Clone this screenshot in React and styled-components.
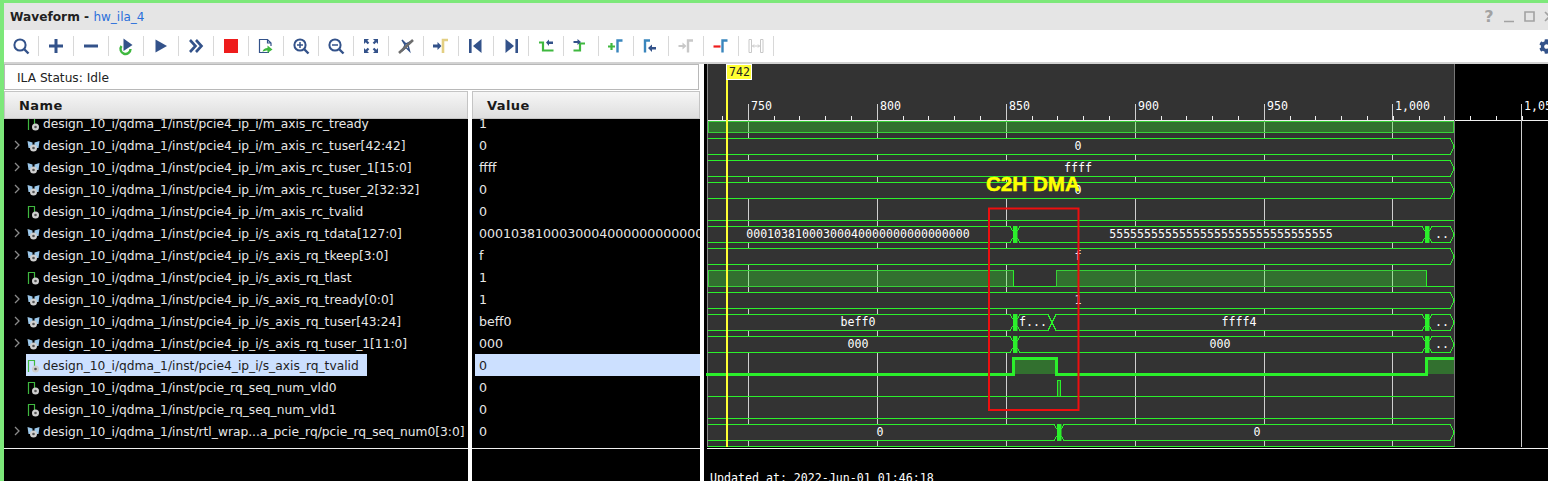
import React from "react";
import styled, { createGlobalStyle } from "styled-components";
import { FaCog } from "react-icons/fa";

const NAVY = "#33528a";
const GREEN = "#3fb83f";
const BLUE = "#3a86bd";
const TRACE = "#2bf02b";

const GlobalStyle = createGlobalStyle`
  html, body {
    margin: 0;
    height: 481px;
    overflow: hidden;
    background: #fff;
  }
`;

// Window frame
const Frame = styled.div`
  height: 478px;
  border-top: 3px solid #7de87a;
  border-left: 4px solid #7de87a;
  display: flex;
  flex-direction: column;
  overflow: hidden;
  font-family: "DejaVu Sans", sans-serif;
`;

const TitleBar = styled.div`
  height: 27px;
  flex: none;
  background: #e5e5e5;
  display: flex;
  align-items: center;
  justify-content: space-between;
  padding-left: 6px;
  font-size: 12.2px;
`;

const TitleText = styled.div`
  font-weight: bold;
  color: #222;
`;

const TitleLink = styled.span`
  font-weight: normal;
  font-size: 12px;
  color: #2a6fdb;
`;

const WindowControls = styled.div`
  display: flex;
  margin-right: -11px;
`;

const WindowButton = styled.div`
  width: 20px;
  height: 20px;
  display: flex;
  align-items: center;
  justify-content: center;
  color: #a2a2a2;
  font-size: 16px;
  font-weight: bold;
`;

// Toolbar
const Toolbar = styled.div`
  height: 32px;
  flex: none;
  background: #fff;
  border-bottom: 2px solid #d2d2d2;
  display: flex;
  align-items: center;
  justify-content: space-between;
`;

const ToolGroup = styled.div`
  display: flex;
  margin-left: -1px;
`;

const ToolButton = styled.div`
  width: 35px;
  height: 32px;
  position: relative;
  display: flex;
  align-items: center;
  justify-content: center;

  &::after {
    content: "";
    position: absolute;
    right: -1px;
    top: 6px;
    height: 20px;
    width: 1px;
    background: #d8d8d8;
  }
`;

const ToolIcon = styled.svg`
  width: 22px;
  height: 22px;
  fill: none;
`;

const GearSlot = styled.div`
  color: ${NAVY};
  display: flex;
  margin-right: -6px;
`;

const stepMark = (x, color) => (
  <path d={`M${x} 17.5V5.5H${x + 5}`} stroke={color} strokeWidth="2.4" />
);

const toolIcons = [
  <>
    <circle cx="10" cy="10" r="5.6" stroke={NAVY} strokeWidth="2" />
    <path d="M14 14l4.5 4.5" stroke={NAVY} strokeWidth="2.4" />
  </>,
  <path d="M11 4v14M4 11h14" stroke={NAVY} strokeWidth="3" />,
  <path d="M4 11h14" stroke={NAVY} strokeWidth="3" />,
  <>
    <path d="M6.5 11a5 5 0 1 0 9 3" stroke={GREEN} strokeWidth="2.4" />
    <path d="M8.5 3.5l9 6.5-9 6z" fill={NAVY} />
  </>,
  <path d="M5.5 4.5l11.5 6.5-11.5 6.5z" fill={NAVY} />,
  <path d="M5 5l5.5 6-5.5 6M11 5l5.5 6-5.5 6" stroke={NAVY} strokeWidth="2.6" />,
  <rect x="4" y="4" width="14" height="14" fill="#ee1c1c" />,
  <>
    <path d="M14 17.5H4.5V4.5h8l3.5 3.5v3M12.5 4.5v3.5h3.5" stroke={NAVY} strokeWidth="1.2" />
    <path d="M7.5 17c.5-3 2.5-4 5-4v-2.5l5 4-5 3.5v-2.5c-2 0-3.5.5-5 1.5z" fill={GREEN} />
  </>,
  <>
    <circle cx="10" cy="10" r="5.6" stroke={NAVY} strokeWidth="2" />
    <path d="M14 14l4.5 4.5" stroke={NAVY} strokeWidth="2.4" />
    <path d="M7 10h6M10 7v6" stroke={NAVY} strokeWidth="1.5" />
  </>,
  <>
    <circle cx="10" cy="10" r="5.6" stroke={NAVY} strokeWidth="2" />
    <path d="M14 14l4.5 4.5" stroke={NAVY} strokeWidth="2.4" />
    <path d="M7 10h6" stroke={NAVY} strokeWidth="1.5" />
  </>,
  <path
    d="M4 4h5L7.3 5.7l2 2-1.6 1.6-2-2L4 9zM18 4v5l-1.7-1.7-2 2-1.6-1.6 2-2L13 4zM4 18v-5l1.7 1.7 2-2 1.6 1.6-2 2L9 18zM18 18h-5l1.7-1.7-2-2 1.6-1.6 2 2L18 13z"
    fill={NAVY}
  />,
  <>
    <path d="M7 5l3 5-3 6 4-3.5 3.5 3.5-1.5-6 2-3-4 2z" stroke={NAVY} strokeWidth="1.4" />
    <path d="M4 18L18 5" stroke="#6d6d6d" strokeWidth="2.6" />
  </>,
  <>
    <path d="M3 9.5h4.5V7l4 4-4 4v-2.5H3z" fill={NAVY} />
    <path d="M13 18V5h5" stroke="#e3cf83" strokeWidth="2.6" />
  </>,
  <>
    <rect x="4" y="4" width="2.6" height="14" fill={NAVY} />
    <path d="M16.5 4v14L8 11z" fill={NAVY} />
  </>,
  <>
    <rect x="15.4" y="4" width="2.6" height="14" fill={NAVY} />
    <path d="M5.5 4v14L14 11z" fill={NAVY} />
  </>,
  <>
    <path d="M4 7.5h4V15.5h10.5" stroke={GREEN} strokeWidth="2.2" />
    <path d="M11 7.5L14 4.5V6.5h4v2.5h-4v2z" fill={NAVY} />
  </>,
  <>
    <path d="M3.5 15.5h6.500V8.5h5" stroke={GREEN} strokeWidth="2.2" />
    <path d="M3.5 6h4V4L11 7l-3.5 3V8h-4z" fill={NAVY} />
  </>,
  <>
    <path d="M3 11.5h7M6.5 8v7" stroke={GREEN} strokeWidth="2.2" />
    {stepMark(12.5, BLUE)}
  </>,
  <>
    {stepMark(5, BLUE)}
    <path d="M8 13l4-3.5V12h4v2.5h-4V17z" fill={NAVY} />
  </>,
  <>
    <path d="M3.5 10h4V7.5l4 3.5-4 3.5V12h-4z" fill="#c8c8c8" />
    {stepMark(13, "#c8c8c8")}
  </>,
  <>
    <path d="M3.5 11.5h7" stroke="#ee1c1c" strokeWidth="2.2" />
    {stepMark(12.5, BLUE)}
  </>,
  <>
    <path d="M4 4.5h2.5v13H4zM15.5 4.5H18v13h-2.5z" stroke="#c8c8c8" />
    <path d="M7.5 11h7M9 9.5L7.5 11 9 12.5M13 9.5l1.500 1.500-1.500 1.500" stroke="#c8c8c8" />
  </>,
];

// Signal tables
const Workspace = styled.div`
  flex: 1;
  min-height: 0;
  display: flex;
`;

const TablesColumn = styled.div`
  width: 696px;
  flex: none;
  display: flex;
  flex-direction: column;
`;

const StatusBox = styled.div`
  height: 26px;
  flex: none;
  width: 695px;
  box-sizing: border-box;
  border: 1px solid #b8b8b8;
  background: #fff;
  display: flex;
  align-items: center;
  padding: 1px 0 0 12px;
  font-size: 12.2px;
  color: #222;
`;

const Tables = styled.div`
  flex: 1;
  min-height: 0;
  margin-top: 1px;
  display: grid;
  grid-template-columns: 464px 228px;
  column-gap: 4px;
`;

const TablePane = styled.div`
  background: #000;
  display: flex;
  flex-direction: column;
  min-height: 0;
  overflow: hidden;
`;

const ColumnHeader = styled.div`
  height: 28px;
  flex: none;
  box-sizing: border-box;
  border: 1px solid #c4c4c4;
  background: linear-gradient(#f6f6f6, #dedede);
  display: flex;
  align-items: center;
  padding-left: ${(p) => p.$indent}px;
  font-weight: bold;
  font-size: 13px;
  letter-spacing: 0.4px;
  color: #1a1a1a;
`;

const RowList = styled.div`
  height: 330px;
  flex: none;
  box-sizing: border-box;
  border-bottom: 1px solid #f0f0f0;
  overflow: hidden;
`;

const RowTrack = styled.div`
  margin-top: -7px;
`;

const NameRow = styled.div`
  height: 22px;
  display: flex;
  align-items: center;
  padding-left: 10px;
`;

const Chevron = styled.svg`
  width: 12px;
  height: 22px;
  flex: none;
  fill: none;
`;

const NameLabel = styled.div`
  height: 22px;
  box-sizing: border-box;
  display: flex;
  align-items: center;
  padding: 1px 8px 0 1px;
  background: ${(p) => (p.$selected ? "#cce0ff" : "transparent")};
  color: ${(p) => (p.$selected ? "#1c1c1c" : "#e8e8e8")};
  font-size: 12.25px;
  white-space: nowrap;
`;

const SignalIcon = styled.svg`
  width: 13px;
  height: 14px;
  margin-right: 3px;
  flex: none;
  fill: none;
`;

const ValueRow = styled.div`
  height: 22px;
  display: flex;
  align-items: center;
  margin-left: 3px;
  padding-left: 4px;
  background: ${(p) => (p.$selected ? "#cce0ff" : "transparent")};
  color: ${(p) => (p.$selected ? "#1c1c1c" : "#e8e8e8")};
  font-size: 12.6px;
  white-space: nowrap;
  overflow: hidden;
`;

const signals = [
  { name: "design_10_i/qdma_1/inst/pcie4_ip_i/m_axis_rc_tready", value: "1" },
  { name: "design_10_i/qdma_1/inst/pcie4_ip_i/m_axis_rc_tuser[42:42]", value: "0", bus: true },
  { name: "design_10_i/qdma_1/inst/pcie4_ip_i/m_axis_rc_tuser_1[15:0]", value: "ffff", bus: true },
  { name: "design_10_i/qdma_1/inst/pcie4_ip_i/m_axis_rc_tuser_2[32:32]", value: "0", bus: true },
  { name: "design_10_i/qdma_1/inst/pcie4_ip_i/m_axis_rc_tvalid", value: "0" },
  { name: "design_10_i/qdma_1/inst/pcie4_ip_i/s_axis_rq_tdata[127:0]", value: "00010381000300040000000000000000", bus: true },
  { name: "design_10_i/qdma_1/inst/pcie4_ip_i/s_axis_rq_tkeep[3:0]", value: "f", bus: true },
  { name: "design_10_i/qdma_1/inst/pcie4_ip_i/s_axis_rq_tlast", value: "1" },
  { name: "design_10_i/qdma_1/inst/pcie4_ip_i/s_axis_rq_tready[0:0]", value: "1", bus: true },
  { name: "design_10_i/qdma_1/inst/pcie4_ip_i/s_axis_rq_tuser[43:24]", value: "beff0", bus: true },
  { name: "design_10_i/qdma_1/inst/pcie4_ip_i/s_axis_rq_tuser_1[11:0]", value: "000", bus: true },
  { name: "design_10_i/qdma_1/inst/pcie4_ip_i/s_axis_rq_tvalid", value: "0", selected: true },
  { name: "design_10_i/qdma_1/inst/pcie_rq_seq_num_vld0", value: "0" },
  { name: "design_10_i/qdma_1/inst/pcie_rq_seq_num_vld1", value: "0" },
  { name: "design_10_i/qdma_1/inst/rtl_wrap...a_pcie_rq/pcie_rq_seq_num0[3:0]", value: "0", bus: true },
];

const BusGlyph = () => (
  <SignalIcon viewBox="0 0 13 14">
    <path d="M0.5 2l5 1.500v5.500H1.500zM12.500 2l-5 1.500v5.500h4z" fill="#9cc8ea" />
    <circle cx="6.500" cy="9" r="3.500" fill="#cfcfcf" />
    <circle cx="6.500" cy="9" r="1.300" fill="#555" />
  </SignalIcon>
);

const BitGlyph = () => (
  <SignalIcon viewBox="0 0 13 14">
    <path d="M1.500 13V1.500H7.500V7" stroke={GREEN} strokeWidth="1.2" />
    <circle cx="8.500" cy="10" r="3.500" fill="#cfcfcf" />
    <circle cx="8.500" cy="10" r="1.300" fill="#555" />
  </SignalIcon>
);

// Waveform
const WavePane = styled.div`
  flex: 1;
  min-width: 0;
  margin-left: 4px;
  background: #000;
  display: flex;
  flex-direction: column;
`;

const WaveCanvas = styled.svg`
  display: block;
  width: 844px;
  height: 385px;
  flex: none;
  font-family: "DejaVu Sans Mono", monospace;
  font-size: 11.62px;
`;

const WaveLine = styled.path`
  fill: none;
  stroke: ${TRACE};
  stroke-width: ${(p) => p.$w || 1}px;
  shape-rendering: crispEdges;
`;

const BusSegment = styled.path`
  fill: #333333;
  stroke: ${TRACE};
  stroke-width: 1px;
  shape-rendering: crispEdges;
`;

const HighFill = styled.rect`
  fill: rgb(50, 255, 40);
  fill-opacity: 0.3;
  stroke: ${(p) => p.$edge || "#38d038"};
  stroke-width: ${(p) => p.$edgeWidth || 1}px;
  shape-rendering: crispEdges;
`;

const GridLine = styled.line`
  stroke: ${(p) => p.$color || "#cfcfcf"};
  stroke-width: 1px;
  shape-rendering: crispEdges;
`;

const WaveText = styled.text`
  fill: ${(p) => p.$fill || "#fff"};
  text-anchor: ${(p) => p.$anchor || "middle"};
`;

const Annotation = styled.text`
  font-family: "Liberation Sans", sans-serif;
  font-weight: bold;
  font-size: 20.6px;
  fill: #ffff00;
  stroke: #ffff00;
  stroke-width: 0.5px;
`;

const UpdatedAt = styled.div`
  padding: 22px 0 0 6px;
  color: #fff;
  font-family: "DejaVu Sans Mono", monospace;
  font-size: 11.62px;
  white-space: nowrap;
`;

const majors = [
  [748, "750"],
  [877, "800"],
  [1006, "850"],
  [1135, "900"],
  [1264, "950"],
  [1392, "1,000"],
  [1521, "1,050"],
];
const minors = Array.from({ length: 32 }, (_, i) => Math.round(722 + i * 25.8));

const top = (row) => 116 + 22 * row;
const END = 1454;

// one bus value, drawn as a hexagon between two transitions
const busPath = (row, a, b, ha, hb) => {
  const t = top(row) + 0.5;
  const m = t + 8;
  const d = t + 16;
  const left = ha ? `M${a} ${m}L${a + ha} ${t}` : `M${a} ${t}`;
  const leftClose = ha ? `L${a + ha} ${d}Z` : `L${a} ${d}`;
  return `${left}L${b - hb} ${t}L${b} ${m}L${b - hb} ${d}${leftClose}`;
};

const busRows = [
  { row: 1, cuts: [], labels: [["0", 1078]] },
  { row: 2, cuts: [], labels: [["ffff", 1078]] },
  { row: 3, cuts: [], labels: [["0", 1078]] },
  {
    row: 5,
    cuts: [[1015, 5], [1427, 5]],
    labels: [
      ["00010381000300040000000000000000", 858],
      ["55555555555555555555555555555555", 1221],
      ["..", 1442],
    ],
  },
  { row: 6, cuts: [], labels: [["f", 1078]] },
  { row: 8, cuts: [], labels: [["1", 1078]] },
  {
    row: 9,
    cuts: [[1015, 5], [1052, 4, true], [1427, 5]],
    labels: [
      ["beff0", 858],
      ["f...", 1033],
      ["ffff4", 1239],
      ["..", 1442],
    ],
  },
  {
    row: 10,
    cuts: [[1015, 5], [1427, 5]],
    labels: [
      ["000", 858],
      ["000", 1220],
      ["..", 1442],
    ],
  },
  { row: 14, cuts: [[1059, 5]], labels: [["0", 880], ["0", 1257]] },
];

const BusRow = ({ row, cuts, labels }) => {
  const edges = [[708, 0], ...cuts, [END, 3.5]];
  return (
    <g>
      {edges.slice(0, -1).map(([a, ha], i) => {
        const [b, hb] = edges[i + 1];
        return <BusSegment key={a} d={busPath(row, a, b, ha, hb)} />;
      })}
      {cuts
        .filter((c) => !c[2])
        .map(([x]) => (
          <rect key={x} x={x - 2} y={top(row)} width={4.5} height={17} fill={TRACE} />
        ))}
      {labels.map(([text, x]) => (
        <WaveText key={text + x} x={x} y={top(row) + 11.5}>
          {text}
        </WaveText>
      ))}
    </g>
  );
};

const Waveform = () => (
  <WaveCanvas viewBox="704 64 844 385">
    <rect x="707" y="64" width="747" height="383" fill="#333333" />

    {/* ruler */}
    <GridLine x1="707" x2="1548" y1="120.5" y2="120.5" $color="#f0f0f0" />
    {minors.map((x) => (
      <GridLine key={x} x1={x + 0.5} x2={x + 0.5} y1="116" y2="120" $color="#f0f0f0" />
    ))}
    {majors.map(([x, label]) => (
      <g key={label}>
        <GridLine x1={x + 0.5} x2={x + 0.5} y1="104" y2="447" />
        <WaveText x={x + 3} y="110" $anchor="start">
          {label}
        </WaveText>
      </g>
    ))}
    <GridLine x1="707.5" x2="707.5" y1="64" y2="447" $color="#8a8a8a" />
    <GridLine x1="1454.5" x2="1454.5" y1="64" y2="447" $color="#777" />

    {/* single bit rows */}
    <HighFill x="708.5" y="121.5" width="745" height="11" />
    <WaveLine d="M708 220.5H1454" />

    <HighFill x="708" y="270.5" width="305.5" height="16" />
    <WaveLine d="M1013.5 270.5V286.5H1056V270.5" />
    <HighFill x="1056" y="270.5" width="370" height="16" />
    <WaveLine d="M1426 270.5V286.5H1454" />

    <rect x="1015" y="359" width="41" height="15" fill="rgb(50,255,40)" fillOpacity="0.3" />
    <WaveLine $w={3} d="M706 374.5H1013.5V358.5H1056V374.5H1426.5V358.5H1454" />
    <rect x="1428" y="360" width="26" height="14" fill="rgb(50,255,40)" fillOpacity="0.3" />

    <WaveLine d="M708 396.5H1454" />
    <HighFill x="1057.5" y="380.5" width="3" height="16" $edge={TRACE} />
    <WaveLine d="M708 418.5H1454" />
    <WaveLine d="M708 446.5H1454" />

    {busRows.map((r) => (
      <BusRow key={r.row} {...r} />
    ))}

    {/* cursor */}
    <rect x="726" y="80" width="2" height="367" fill="#ffff33" />
    <rect x="726.5" y="64.5" width="25" height="15" fill="#ffff33" stroke="#fff" />
    <WaveText x="729" y="76" $anchor="start" $fill="#222">
      742
    </WaveText>

    <GridLine x1="707" x2="1548" y1="448.5" y2="448.5" $color="#f4f4f4" />

    {/* note drawn on the capture */}
    <rect x="989" y="208.5" width="89.5" height="201.5" fill="none" stroke="#ee0f0f" strokeWidth="2" />
    <Annotation x="986" y="191">
      C2H DMA
    </Annotation>
  </WaveCanvas>
);

const App = () => (
  <>
    <GlobalStyle />
    <Frame>
      <TitleBar>
        <TitleText>
          Waveform - <TitleLink>hw_ila_4</TitleLink>
        </TitleText>
        <WindowControls>
          <WindowButton>?</WindowButton>
          <WindowButton>
            <svg width="12" height="12" viewBox="0 0 12 12" fill="none">
              <path d="M1 10.5h10" stroke="#a2a2a2" strokeWidth="1.5" />
            </svg>
          </WindowButton>
          <WindowButton>
            <svg width="11" height="11" viewBox="0 0 11 11" fill="none">
              <path d="M1 1h9v9H1z" stroke="#a2a2a2" strokeWidth="1.6" />
            </svg>
          </WindowButton>
          <WindowButton>
            <svg width="11" height="11" viewBox="0 0 11 11" fill="none">
              <path d="M1 1l9 9M10 1l-9 9" stroke="#a2a2a2" strokeWidth="1.6" />
            </svg>
          </WindowButton>
        </WindowControls>
      </TitleBar>

      <Toolbar>
        <ToolGroup>
          {toolIcons.map((icon, i) => (
            <ToolButton key={i}>
              <ToolIcon viewBox="0 0 22 22">{icon}</ToolIcon>
            </ToolButton>
          ))}
        </ToolGroup>
        <GearSlot>
          <FaCog size={15} />
        </GearSlot>
      </Toolbar>

      <Workspace>
        <TablesColumn>
          <StatusBox>ILA Status: Idle</StatusBox>
          <Tables>
            <TablePane>
              <ColumnHeader $indent={14}>Name</ColumnHeader>
              <RowList>
                <RowTrack>
                  {signals.map((s) => (
                    <NameRow key={s.name}>
                      <Chevron viewBox="0 0 12 22">
                        {s.bus && <path d="M1 7l4 4-4 4" stroke="#8a8a8a" strokeWidth="1.3" />}
                      </Chevron>
                      <NameLabel $selected={s.selected}>
                        {s.bus ? <BusGlyph /> : <BitGlyph />}
                        {s.name}
                      </NameLabel>
                    </NameRow>
                  ))}
                </RowTrack>
              </RowList>
            </TablePane>
            <TablePane>
              <ColumnHeader $indent={14}>Value</ColumnHeader>
              <RowList>
                <RowTrack>
                  {signals.map((s) => (
                    <ValueRow key={s.name} $selected={s.selected}>
                      {s.value}
                    </ValueRow>
                  ))}
                </RowTrack>
              </RowList>
            </TablePane>
          </Tables>
        </TablesColumn>

        <WavePane>
          <Waveform />
          <UpdatedAt>Updated at: 2022-Jun-01 01:46:18</UpdatedAt>
        </WavePane>
      </Workspace>
    </Frame>
  </>
);

export default App;
